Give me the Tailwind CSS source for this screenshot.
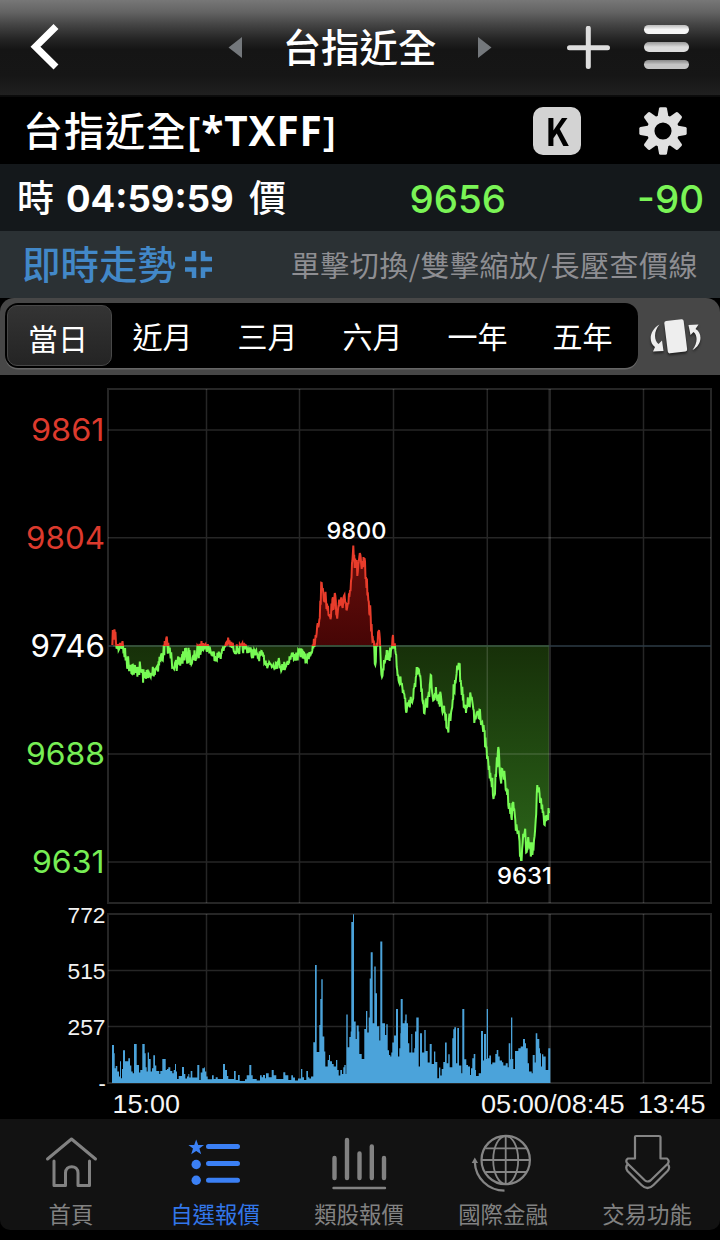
<!DOCTYPE html>
<html lang="zh-Hant">
<head>
    <meta charset="UTF-8">
    <meta name="viewport" content="width=device-width, initial-scale=1.0">
    <title>台指近全</title>
    <script src="https://cdn.jsdelivr.net/npm/@tailwindcss/browser@4"></script>
</head>
<body class="bg-black">
    <div class="w-[720px] h-[1240px] flex flex-col overflow-hidden bg-black text-white font-['Inter','Noto_Sans_CJK_TC',sans-serif] whitespace-nowrap">
        <!-- 標題列 -->
        <header class="h-[97px] shrink-0 flex items-center border-b-2 border-[#0b0b0b] bg-[linear-gradient(#777_0%,#636363_13%,#424242_27%,#252525_41%,#151515_52%,#161616_80%,#202020_100%)]">
            <svg class="w-[228px] h-[95px]" viewBox="0 0 228 95" fill="none">
                <path d="M56 26.5L35.5 46.8L56 67" stroke="#fff" stroke-width="7"/>
            </svg>
            <svg class="w-[14px] h-[22px]" viewBox="0 0 14 22"><path d="M14 0V21L0.5 10.500z" fill="#74787c"/></svg>
            <h1 class="w-[236px] pr-[1px] text-center text-[38.4px] leading-[95px] pt-[1px] font-medium">台指近全</h1>
            <svg class="w-[14px] h-[22px]" viewBox="0 0 14 22"><path d="M0 0V21L13.5 10.500z" fill="#74787c"/></svg>
            <svg class="ml-[75px] w-[43px] h-[44px]" viewBox="0 0 43 44" stroke="#dedede" stroke-width="5" stroke-linecap="round">
                <path d="M21.3 2.3V40.500M2.5 21.7H40.5"/>
            </svg>
            <div class="ml-[34px] mb-[1px] flex flex-col gap-2">
                <div class="w-[45px] h-[9.5px] rounded-full bg-linear-to-b from-[#bbb] via-[#f5f5f5] to-[#f5f5f5]"></div>
                <div class="w-[45px] h-[9.5px] rounded-full bg-linear-to-b from-[#999] via-[#dcdcdc] to-[#dcdcdc]"></div>
                <div class="w-[45px] h-[9.5px] rounded-full bg-linear-to-b from-[#888] via-[#c4c4c4] to-[#c4c4c4]"></div>
            </div>
        </header>

        <!-- 商品名稱 -->
        <section class="h-[67px] shrink-0 flex items-center pl-[23px]">
            <h2 class="w-[510px] pb-[1px] text-[40px] leading-[64px] font-medium tracking-[1px] font-['Noto_Sans_CJK_TC',sans-serif]">台指近全<b class="inline-block text-[40.5px] tracking-[0.9px] font-bold font-['Open_Sans',sans-serif]"><span class="font-semibold">[</span>*TXFF<span class="font-semibold">]</span></b></h2>
            <div class="w-[48px] h-[48px] rounded-[10px] bg-[#d3d3d3] text-black text-center text-[38px] leading-[45px] font-bold font-['Noto_Sans_CJK_TC',sans-serif]"><span class="inline-block scale-x-90">K</span></div>
            <svg class="ml-[57px] w-[50px] h-[50px]" viewBox="-25 -25 50 50" fill="#e0e0e0">
                <circle r="12.3" fill="none" stroke="#e0e0e0" stroke-width="7.5"/>
                <g id="gear"></g>
            </svg>
        </section>

        <!-- 成交報價 -->
        <section class="h-[67px] shrink-0 flex items-center bg-[#14181b] pl-[17px] pt-[3px] leading-[64px]">
            <span class="w-[49px] text-[37px] font-medium">時</span>
            <span class="w-[183px] text-[36.5px] font-bold">04:59:59</span>
            <span class="text-[37px] font-medium">價</span>
            <span class="w-[220px] text-right text-[38.5px] font-medium text-[#7af456]">9656</span>
            <span class="w-[198px] text-right text-[38.5px] font-medium text-[#7af456]">-90</span>
        </section>

        <!-- 即時走勢 -->
        <section class="h-[67px] shrink-0 flex items-center bg-[#2b3134] pl-[22px] leading-[67px]">
            <span class="pt-[2px] text-[38.5px] text-[#4288c8] font-medium">即時走勢</span>
            <svg class="ml-[8px] w-[29px] h-[29px]" viewBox="0 0 29 29" fill="none" stroke="#4288c8" stroke-width="4.5">
                <path d="M1 9H10V1M19 1V9H28M1 19.5H10V28M19 28V19.5H28"/>
            </svg>
            <span class="ml-auto mr-[22px] text-[29px] tracking-[0.5px] text-[#8e8e92] font-normal font-['Noto_Sans_CJK_TC',sans-serif]">單擊切換/雙擊縮放/長壓查價線</span>
        </section>

        <!-- 週期切換 -->
        <nav class="h-[77px] shrink-0 flex items-start bg-[#474747] rounded-t-[14px] pl-[5px] pt-[5px]">
            <div class="w-[633px] h-[65px] rounded-[13px] bg-black flex items-center pl-[1.5px] text-[30px] font-['Noto_Sans_CJK_TC',sans-serif] text-center shadow-[0_1.5px_0_#666]">
                <div class="w-[105px] h-[61px] rounded-[10px] border border-[#484848] bg-linear-to-b from-[#343434] to-[#242424] pr-[2px] leading-[63px]">當日</div>
                <div class="w-[105px] pr-[3px]">近月</div>
                <div class="w-[105px] pr-[3px]">三月</div>
                <div class="w-[105px] pr-[3px]">六月</div>
                <div class="w-[105px] pr-[3px]">一年</div>
                <div class="w-[105px] pr-[3px]">五年</div>
            </div>
            <svg class="ml-[11px] mt-[14px] w-[54px] h-[40px] drop-shadow-[0_2px_1px_#222]" viewBox="0 0 54 40" fill="#eee">
                <rect x="17" y="3" width="19.500" height="32.500" rx="2" transform="rotate(-7 27 19.5)"/>
                <path d="M10.5 7.5C0.500 13-1 25 6 30L4 34.500L14.500 34L13 23.500L9.500 27C4.500 23 5 13.500 10.500 7.500z"/>
                <path d="M43.500 33C53 28 54 16 46.500 12L49.500 7.500L39.500 8L41.500 18L44.500 15C49 18 48.500 27 43.500 33z"/>
            </svg>
        </nav>

        <!-- 走勢圖 + 成交量 -->
        <svg class="w-[720px] h-[744px] shrink-0" viewBox="0 375 720 744">
            <defs>
                <linearGradient id="redFill" gradientUnits="userSpaceOnUse" x1="0" y1="546" x2="0" y2="646">
                    <stop offset="0" stop-color="#680f0c"/><stop offset="1" stop-color="#460505"/>
                </linearGradient>
                <linearGradient id="greenFill" gradientUnits="userSpaceOnUse" x1="0" y1="646" x2="0" y2="862">
                    <stop offset="0" stop-color="#173009"/><stop offset="1" stop-color="#2b6519"/>
                </linearGradient>
                <clipPath id="above"><rect x="108" y="388" width="604" height="258"/></clipPath>
                <clipPath id="below"><rect x="108" y="646" width="604" height="257"/></clipPath>
            </defs>
            <path id="redArea" fill="url(#redFill)" clip-path="url(#above)"/>
            <path id="greenArea" fill="url(#greenFill)" clip-path="url(#below)"/>
            <g fill="none" stroke="#fff" stroke-opacity="0.15" stroke-width="2">
                <path d="M108 389H711V903H108zM108 914H711V1083H108z"/>
                <path stroke-width="1.5" d="M108 430H711M108 537.700H711M108 754H711M108 862H711M108 970.500H711M108 1026.500H711M206.500 389V903M299.500 389V903M393.500 389V903M487.300 389V903M643.500 389V903M206.500 914V1083M299.500 914V1083M393.500 914V1083M487.300 914V1083M643.500 914V1083"/>
                <path stroke-width="2.5" d="M549.700 389V903M549.700 914V1083"/>
            </g>
            <path d="M108 646H711" stroke="#2c3b46" stroke-width="1.500"/>
            <path d="M113 646H549" stroke="#3a5a3a" stroke-width="1.500"/>
            <path id="redLine" fill="none" stroke="#e83c2b" stroke-width="2" clip-path="url(#above)"/>
            <path id="greenLine" fill="none" stroke="#77fb55" stroke-width="2" clip-path="url(#below)"/>
            <path id="volume" fill="#4ba3da"/>

            <g font-family="Inter, sans-serif" font-size="31">
                <text x="31" y="441" textLength="73.500" lengthAdjust="spacingAndGlyphs" fill="#dc3a2d">9861</text>
                <text x="26" y="549" textLength="79" lengthAdjust="spacingAndGlyphs" fill="#dc3a2d">9804</text>
                <text x="30.500" y="657" textLength="74.500" lengthAdjust="spacingAndGlyphs" fill="#fff">9746</text>
                <text x="26" y="765" textLength="79" lengthAdjust="spacingAndGlyphs" fill="#77ee55">9688</text>
                <text x="32" y="873" textLength="72.500" lengthAdjust="spacingAndGlyphs" fill="#77ee55">9631</text>
            </g>
            <g font-family="Inter, sans-serif" font-size="22.500" font-weight="500" fill="#fff">
                <text x="326.500" y="539" textLength="60" lengthAdjust="spacingAndGlyphs">9800</text>
                <text x="497" y="883.500" textLength="55" lengthAdjust="spacingAndGlyphs">9631</text>
            </g>
            <g font-family="'Liberation Sans', sans-serif" font-size="22" fill="#f2f2f2">
                <text x="67.500" y="922.500" textLength="38" lengthAdjust="spacingAndGlyphs">772</text>
                <text x="67.500" y="978.500" textLength="38" lengthAdjust="spacingAndGlyphs">515</text>
                <text x="67.500" y="1034.500" textLength="38" lengthAdjust="spacingAndGlyphs">257</text>
                <text x="98.500" y="1091">-</text>
            </g>
            <g font-family="'Liberation Sans', sans-serif" font-size="26" fill="#f5f5f5">
                <text x="112.500" y="1112.500" textLength="67.500" lengthAdjust="spacingAndGlyphs">15:00</text>
                <text x="481" y="1112.500" textLength="143.500" lengthAdjust="spacingAndGlyphs">05:00/08:45</text>
                <text x="638" y="1112.500" textLength="67.500" lengthAdjust="spacingAndGlyphs">13:45</text>
            </g>
        </svg>

        <!-- 底部選單 -->
        <footer class="h-[111px] shrink-0 grid grid-cols-5 bg-[#121212] rounded-b-[10px] text-[#828282] text-[22.4px] leading-[28px] text-center font-['Noto_Sans_CJK_TC',sans-serif]">
            <div class="flex flex-col items-center pt-[14px] pr-[2px]">
                <svg class="w-[60px] h-[66px]" viewBox="41 1133 60 66" fill="none" stroke="#828282" stroke-width="3" stroke-linecap="round" stroke-linejoin="round">
                    <path d="M47.500 1159L71.500 1139L95.500 1159M54 1161V1185.500H65.500V1173C65.500 1164.500 78 1164.500 78 1173V1185.500H89.500V1161"/>
                </svg>
                <span>首頁</span>
            </div>
            <div class="flex flex-col items-center pt-[14px] pr-[2px] text-[#3277ea]">
                <svg class="w-[60px] h-[66px]" viewBox="185 1133 60 66" fill="#3b80f5">
                    <path d="M196.200 1139.500L198.200 1145H204L199.400 1148.600L201.200 1154.300L196.200 1151L191.200 1154.300L193 1148.600L188.400 1145H194.200z"/>
                    <circle cx="196.200" cy="1164.500" r="4.700"/>
                    <circle cx="196.200" cy="1180.200" r="4.700"/>
                    <path d="M208.500 1146.500H237.500M208.500 1163.500H237.500M208.500 1180.300H237.500" stroke="#3b80f5" stroke-width="5" stroke-linecap="round"/>
                </svg>
                <span>自選報價</span>
            </div>
            <div class="flex flex-col items-center pt-[14px] pr-[2px]">
                <svg class="w-[60px] h-[66px]" viewBox="329 1133 60 66" fill="none" stroke="#828282" stroke-linecap="round">
                    <path stroke-width="4.400" d="M334.500 1158V1178M347 1140V1178M359.500 1153.500V1178M371.800 1146.500V1178M384 1158V1178"/>
                    <path stroke-width="2.400" d="M333.500 1188H385"/>
                </svg>
                <span>類股報價</span>
            </div>
            <div class="flex flex-col items-center pt-[14px] pr-[2px]">
                <svg class="w-[66px] h-[66px]" viewBox="470 1133 66 66" fill="none" stroke="#858585" stroke-width="1.800">
                    <circle cx="505.700" cy="1160" r="24.200" stroke-width="2.200"/>
                    <ellipse cx="505.700" cy="1160" rx="12.500" ry="24"/>
                    <path d="M505.700 1136V1184M481.500 1160H530M485.500 1148.300H526M485.500 1172H526"/>
                    <path d="M474.800 1162C475.500 1178 488 1190.500 504.500 1190.700" stroke-width="2.300"/>
                    <path d="M474.800 1157.500L478 1163H471.700z" fill="#858585" stroke="none"/>
                </svg>
                <span>國際金融</span>
            </div>
            <div class="flex flex-col items-center pt-[14px] pr-[2px]">
                <svg class="w-[60px] h-[66px]" viewBox="617 1133 60 66" fill="none" stroke="#858585" stroke-width="2.200" stroke-linejoin="round">
                    <path d="M635 1137Q635 1136 636 1136H659Q660.500 1136 660.500 1137V1158.500H667Q670 1161 667.500 1164L650.500 1180.500Q647.500 1182.500 645 1180.500L628 1164Q624.500 1160.500 628 1158.500H635z"/>
                    <path d="M627.500 1164.500Q625 1167.500 627.500 1171L641.500 1185Q647.500 1191 653.500 1185L667.500 1171Q670.500 1167.500 668 1164.500"/>
                </svg>
                <span>交易功能</span>
            </div>
        </footer>
    </div>

    <script>
        const BASE = 646;

        // 分時價格 [x, y]
        const price = [
            [112.3,645],[113.3,632],[115,633.5],[116,643],[117.7,648],[120,643],[122,643.5],[124,652],[126.7,661],[130,665],[133.3,668],[136,673],[138.3,667],[141.7,672],[144,678],[146.7,670],[148.3,678],[150.7,677],[153.3,670],[156.7,667],[160,660],[163.3,653],[165.7,645],[167.3,643],[169.3,652],[171.7,660],[175,663],[176.7,671],[178.7,663],[181.7,660],[184,653],[186.7,657],[190,655],[192,663],[195,657],[198.3,652],[201,647],[203.3,643],[206,648],[208.3,647],[210.7,652],[215,656],[218.3,656],[221.7,653],[224,648],[226.7,642],[230,644],[233.3,648],[238.3,650],[246.7,647],[250,652],[256.7,655],[263.3,657],[266.7,663],[273.3,665],[278.3,662],[282.7,668],[286.7,663],[290,658],
            [293.3,655],[296.7,657],[301.7,651.5],[306,661],[309.3,653],[313.3,648.5],[315,643],[316.7,633],[319.3,620],[321.7,583],[323.3,593],[326,600],[330,614],[334.3,598.5],[337.7,613],[340.7,602],[342.7,608],[345,600],[347.3,607],[350,590],[352,563],[353.3,545.5],[354.7,568],[356.7,560],[357.3,576],[359.3,557],[361.7,569],[364,562],[366,577],[368.3,600],[370.7,617],[372,635],[373.3,643],[375.3,665],[376.7,643],[379,630],[380.3,650],[382,677],[384,660],[386.7,650],[388.7,658],[391,650],[393,635],[394.3,647],[396.7,667],[400,680],[403.3,690],[406.7,711],[409.3,700],[412.7,700],[415.3,687],[416.7,667],[419.3,673],[421.3,692],[424,713],[426.7,703],[429.3,697],[430.7,675],[432.7,697],[435,693],[438.3,695],[441.7,703],[445,713],[447.3,728],[450,720],[452.7,700],[455,680],[458.7,663],[460.7,680],[463.3,697],[466,713],[468.3,703],[471.7,697],[474.3,723],[476.7,713],[480,710],[482.7,727],[486,747],[488.7,770],[491.3,780],[494,795],[496,777],[498.3,747],[500.7,780],[503.3,773],[506.7,790],[509.3,803],[511.3,817],[513.3,802],[515.3,820],[518,833],[521,860],[522.7,843],[524.7,832],[526.7,852],[528.7,842],[531.3,853],[534,840],[535.7,820],[537.3,785],[540,803],[542.7,813],[544.7,825],[546.7,815],[549,813]
        ];

        // 成交量，階梯狀 [x, 高度]
        const volume = [
            [336,465],[342,490],[344,535],[347,528],[352,545],[357,560],[360,514],[363,565],[366,537],[369,481],[375,514],[385,505],[390,527],[394,545],[398,550],[402,462],[410,525],[417,548],[421,540],[427,462],[434,490],[437,532],[440,545],[443,488],[447,507],[452,545],[456,535],[460,496],[465,527],[469,543],[478,552],[481,543],[487,507],[497,540],[501,537],[505,532],[511,543],[517,550],[521,540],[525,522],[528,545],[531,567],[536,558],[546,531],[552,552],[556,566],[561,560],[565,552],[568,563],[572,543],[577,563],[592,525],[598,570],[602,548],[607,535],[613,532],[615,545],[619,560],[623,568],[636,556],[641,567],[647,562],[653,567],[669,522],[675,540],[681,558],[685,567],[702,543],[707,570],[714,555],[719,573],[735,568],[740,556],[748,525],[754,556],[758,567],[770,572],[780,556],[785,562],[789,555],[795,565],[798,550],[806,562],[815,540],[821,556],[829,567],[850,547],[856,556],[865,570],[874,556],[879,563],[885,572],[894,566],
            [903,537],[907,562],[912,570],[919,543],[924,562],[928,566],[933,560],[940,457],[945,225],[950,486],[958,405],[961,327],[964,268],[968,440],[973,485],[976,530],[983,510],[987,495],[990,514],[996,522],[1001,530],[1008,510],[1012,540],[1016,557],[1021,540],[1026,552],[1030,532],[1033,525],[1037,552],[1039,374],[1043,472],[1048,441],[1052,425],[1054,96],[1059,73],[1062,395],[1067,447],[1070,407],[1076,425],[1078,492],[1085,507],[1093,417],[1098,363],[1102,428],[1106,383],[1109,266],[1112,187],[1118,400],[1123,230],[1127,310],[1131,409],[1138,452],[1141,155],[1147,400],[1155,435],[1159,403],[1163,481],[1167,495],[1171,500],[1174,488],[1177,458],[1182,437],[1188,357],[1194,500],[1198,475],[1201,430],[1202,327],[1208,400],[1214,392],[1216,374],[1220,400],[1224,460],[1228,488],[1234,432],[1237,488],[1243,475],[1245,425],[1249,383],[1256,530],[1260,430],[1266,488],[1273,420],[1277,483],[1283,518],[1289,462],[1295,522],[1302,485],[1306,516],[1312,565],[1317,533],[1321,557],[1325,537],[1330,516],[1335,458],[1340,520],[1345,493],[1349,532],[1357,445],[1360,418],[1363,412],[1368,520],[1372,414],[1377,527],[1384,550],[1387,357],[1393,508],[1399,525],[1404,530],[1410,555],[1413,535],[1417,505],[1421,492],[1426,540],[1428,558],[1436,550],[1443,423],[1449,512],[1452,432],[1458,507],[1460,357],[1464,505],[1468,497],[1473,523],[1477,518],[1486,492],[1490,480],[1495,500],[1499,512],[1506,517],[1510,527],[1517,520],[1523,532],[1526,460],[1531,508],[1533,383],[1537,507],[1540,537],[1545,483],[1555,475],[1562,470],[1569,447],[1575,460],[1578,475],[1583,520],[1587,545],[1595,550],[1598,495],[1604,518],[1607,430],[1612,447],[1618,475],[1620,490],[1623,530],[1626,493],[1630,500],[1637,540],[1645,475],[1651,577]
        ].map(([x, y]) => [x / 3, (577 - y) / 3]);

        // 在主要轉折點之間補上每一跳的小幅波動
        function buildLine() {
            let seed = 7;
            const rand = () => (seed = (seed * 16807) % 2147483647) / 2147483647;
            const pts = [];
            for (let i = 0; i < price.length - 1; i++) {
                const [x0, y0] = price[i];
                const [x1, y1] = price[i + 1];
                const steps = Math.max(2, Math.round((x1 - x0) / 0.5));
                pts.push([x0, y0]);
                for (let s = 1; s < steps; s++) {
                    const t = s / steps;
                    const amp = x0 > 200 && x0 < 313 ? 11 : 17;
                    const y = y0 + (y1 - y0) * t + (rand() - 0.5) * amp;
                    pts.push([x0 + (x1 - x0) * t, Math.max(546, Math.min(860, y))]);
                }
            }
            pts.push(price[price.length - 1]);
            return pts.map(p => p[0].toFixed(1) + ' ' + p[1].toFixed(1)).join('L');
        }

        const line = buildLine();
        const area = `M112.3 ${BASE}L${line}V${BASE}z`;
        document.getElementById('redLine').setAttribute('d', 'M' + line);
        document.getElementById('greenLine').setAttribute('d', 'M' + line);
        document.getElementById('redArea').setAttribute('d', area);
        document.getElementById('greenArea').setAttribute('d', area);

        let bars = 'M112 1083';
        volume.forEach(([x, h]) => {
            bars += `H${x.toFixed(1)}V${(1082.3 - h).toFixed(1)}`;
        });
        document.getElementById('volume').setAttribute('d', bars + 'V1083z');

        // 齒輪的八個齒
        let teeth = '';
        for (let i = 0; i < 8; i++) {
            teeth += `<path d="M-5.500 -14L-4 -22.500Q-3.700 -23.700 -2.500 -23.700H2.500Q3.700 -23.700 4 -22.500L5.500 -14z" transform="rotate(${i * 45})"/>`;
        }
        document.getElementById('gear').innerHTML = teeth;
    </script>
</body>
</html>
